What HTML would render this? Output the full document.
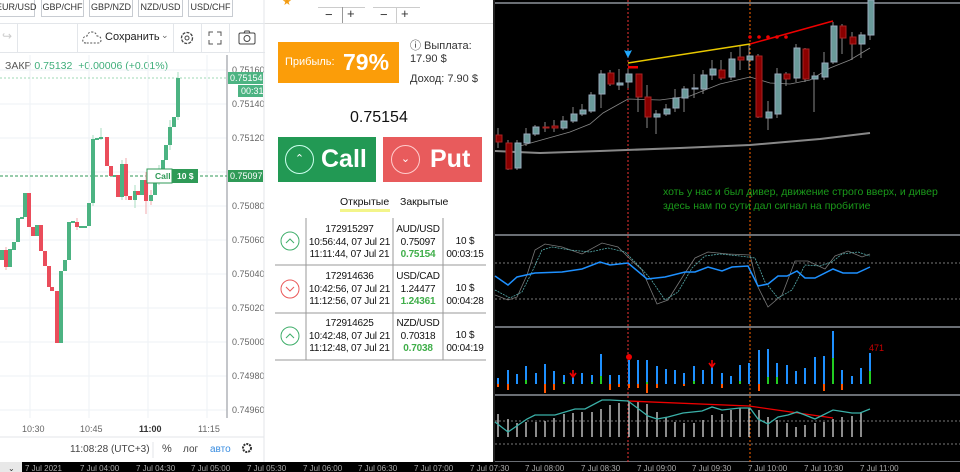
<!DOCTYPE html>
<html><head><meta charset="utf-8"><style>
*{margin:0;padding:0;box-sizing:border-box}
body{width:960px;height:472px;overflow:hidden;background:#000;font-family:"Liberation Sans",sans-serif;position:relative}
.a{position:absolute;white-space:nowrap}
.tab{position:absolute;top:0;height:17px;border:1px solid #c8ccd2;border-top:none;font-size:9px;color:#333;text-align:center;line-height:15px;background:#fff}
.cell{position:absolute;font-size:10px;color:#111;text-align:center;line-height:12.5px;white-space:nowrap;letter-spacing:-0.2px}
.g{color:#3fae49;font-weight:bold}
</style></head><body>
<!-- left panel -->
<div class="a" style="left:0;top:0;width:265px;height:462px;background:#fff"></div>
<div class="tab" style="left:-5px;width:40px">EUR/USD</div>
<div class="tab" style="left:41px;width:43px">GBP/CHF</div>
<div class="tab" style="left:89px;width:44px">GBP/NZD</div>
<div class="tab" style="left:138px;width:45px">NZD/USD</div>
<div class="tab" style="left:188px;width:45px">USD/CHF</div>
<div class="a" style="left:0;top:23px;width:265px;height:1px;background:#e3e6ea"></div>
<div class="a" style="left:0;top:52px;width:265px;height:1px;background:#e3e6ea"></div>
<div class="a" style="left:17px;top:24px;width:1px;height:28px;background:#e3e6ea"></div>
<div class="a" style="left:77px;top:24px;width:1px;height:28px;background:#e3e6ea"></div>
<div class="a" style="left:173px;top:24px;width:1px;height:28px;background:#e3e6ea"></div>
<div class="a" style="left:201px;top:24px;width:1px;height:28px;background:#e3e6ea"></div>
<div class="a" style="left:229px;top:24px;width:1px;height:28px;background:#e3e6ea"></div>
<div class="a" style="left:2px;top:29px;font-size:12px;color:#ccc">↪</div>
<svg class="a" style="left:82px;top:30px" width="20" height="16"><path d="M4 13 Q0 13 1 9 Q2 6 5 6 Q6 2 10 2 Q14 2 15 6 Q19 6 19 10 Q19 13 16 13 Z" fill="none" stroke="#555" stroke-dasharray="2 1.5"/></svg>
<div class="a" style="left:105px;top:31px;font-size:11px;color:#222">Сохранить</div>
<div class="a" style="left:161px;top:30px;font-size:9px;color:#666">⌄</div>
<svg class="a" style="left:178px;top:29px" width="18" height="18"><circle cx="9" cy="9" r="5.5" fill="none" stroke="#444" stroke-width="1.3" stroke-dasharray="3 1.2"/><circle cx="9" cy="9" r="2" fill="none" stroke="#444"/></svg>
<svg class="a" style="left:208px;top:31px" width="14" height="14" stroke="#555" fill="none"><path d="M1 5V1h4M9 1h4v4M13 9v4H9M5 13H1V9"/></svg>
<svg class="a" style="left:238px;top:30px" width="18" height="15" stroke="#444" fill="none"><rect x="1" y="3" width="16" height="11" rx="1.5"/><circle cx="9" cy="8.5" r="3"/><path d="M6 3l1-2h4l1 2"/></svg>
<div class="a" style="left:5px;top:60px;font-size:10.5px;color:#555">ЗАКР <span style="color:#3fae7a">0.75132</span> &nbsp;<span style="color:#3fae7a">+0.00006 (+0.01%)</span></div>
<svg class="a" style="left:0;top:0" width="265" height="462">
<g stroke="#eef2f6" stroke-width="1">
<path d="M0 70H227M0 104H227M0 138H227M0 172H227M0 206H227M0 240H227M0 274H227M0 308H227M0 342H227M0 376H227M0 410H227M30 55V418M89 55V418M148 55V418M207 55V418"/></g>
<line x1="227" y1="55" x2="227" y2="418" stroke="#b0b3b8" stroke-width="1.5"/>
<g font-size="9" fill="#666" font-family="Liberation Sans">
<text x="232" y="73">0.75160</text><text x="232" y="107">0.75140</text><text x="232" y="141">0.75120</text><text x="232" y="209">0.75080</text><text x="232" y="243">0.75060</text><text x="232" y="277">0.75040</text><text x="232" y="311">0.75020</text><text x="232" y="345">0.75000</text><text x="232" y="379">0.74980</text><text x="232" y="413">0.74960</text>
<text x="22" y="432">10:30</text><text x="80" y="432">10:45</text><text x="139" y="432" font-weight="bold" fill="#333">11:00</text><text x="198" y="432">11:15</text>
</g>
<line x1="0" y1="78" x2="227" y2="78" stroke="#9fd8b5" stroke-dasharray="2 2"/>
<line x1="0" y1="176" x2="227" y2="176" stroke="#2f9a57" stroke-dasharray="3 2"/>
<g stroke-width="1">
<path stroke="#f2a8ae" d="M6 247V270M126 158V200M146 172V214M77 218V230M151 190V205"/>
<path stroke="#a8dcc0" d="M93 135V206M101 128V140M122 160V200M135 185V208M159 165V185M170 120V150M178 72V120"/>
</g>
<g fill="#4cb382">
<rect x="0" y="250" width="4" height="10"/><rect x="8" y="249" width="4" height="18"/><rect x="12" y="242" width="4" height="8"/><rect x="16" y="218" width="4" height="24"/><rect x="20" y="217" width="4" height="2"/><rect x="23" y="193" width="4" height="24"/><rect x="35" y="225" width="4" height="11"/><rect x="59" y="271" width="4" height="72"/><rect x="63" y="260" width="4" height="11"/><rect x="67" y="222" width="4" height="38"/><rect x="71" y="221" width="4" height="2"/><rect x="79" y="226" width="4" height="2"/><rect x="83" y="226" width="4" height="2"/><rect x="87" y="203" width="4" height="23"/><rect x="91" y="139" width="4" height="64"/><rect x="95" y="138" width="4" height="2"/><rect x="99" y="137" width="4" height="2"/><rect x="113" y="175" width="4" height="2"/><rect x="120" y="164" width="4" height="33"/><rect x="133" y="191" width="4" height="9"/><rect x="140" y="180" width="4" height="15"/><rect x="149" y="195" width="4" height="6"/><rect x="153" y="180" width="4" height="15"/><rect x="157" y="170" width="4" height="10"/><rect x="161" y="160" width="4" height="10"/><rect x="164" y="145" width="4" height="15"/><rect x="168" y="127" width="4" height="18"/><rect x="172" y="117" width="4" height="10"/><rect x="176" y="78" width="4" height="39"/>
</g>
<g fill="#ea4d5b">
<rect x="4" y="250" width="4" height="17"/><rect x="27" y="193" width="4" height="34"/><rect x="31" y="227" width="4" height="9"/><rect x="39" y="225" width="4" height="26"/><rect x="43" y="251" width="4" height="15"/><rect x="47" y="266" width="4" height="21"/><rect x="50" y="287" width="4" height="4"/><rect x="55" y="291" width="4" height="52"/><rect x="75" y="222" width="4" height="5"/><rect x="105" y="137" width="4" height="29"/><rect x="109" y="166" width="4" height="10"/><rect x="116" y="175" width="4" height="22"/><rect x="124" y="164" width="4" height="32"/><rect x="128" y="196" width="4" height="4"/><rect x="136" y="191" width="4" height="4"/><rect x="144" y="180" width="4" height="21"/>
</g>
<rect x="147" y="169" width="25" height="14" fill="#fff" stroke="#2f9a57"/><text x="155" y="179" font-size="8.5" fill="#2f9a57" font-weight="bold" font-family="Liberation Sans">Call</text>
<rect x="172" y="169" width="26" height="14" fill="#2f9a57"/><text x="177" y="179" font-size="8.5" fill="#fff" font-weight="bold" font-family="Liberation Sans">10 $</text>
<rect x="228" y="72" width="35" height="12" fill="#4cb382"/><text x="230" y="81" font-size="9" fill="#fff" font-family="Liberation Sans">0.75154</text>
<rect x="238" y="85" width="25" height="12" fill="#4cb382"/><text x="241" y="94" font-size="9" fill="#fff" font-family="Liberation Sans">00:31</text>
<rect x="228" y="170" width="35" height="12" fill="#2f9a57"/><text x="230" y="179" font-size="9" fill="#fff" font-family="Liberation Sans">0.75097</text>
<line x1="0" y1="437" x2="264" y2="437" stroke="#e3e6ea"/>
<line x1="153" y1="442" x2="153" y2="458" stroke="#e3e6ea"/>
<g font-size="10" font-family="Liberation Sans"><text x="70" y="452" fill="#444">11:08:28 (UTC+3)</text><text x="162" y="452" fill="#444" font-size="11">%</text><text x="183" y="452" fill="#444">лог</text><text x="210" y="452" fill="#3a8de0">авто</text></g>
<circle cx="247" cy="448" r="4" fill="none" stroke="#333" stroke-width="2" stroke-dasharray="2 1"/>
<line x1="264" y1="0" x2="264" y2="462" stroke="#e3e6ea"/>
</svg>

<!-- right white panel -->
<div class="a" style="left:265px;top:0;width:228px;height:462px;background:#fff"></div>
<div class="a" style="left:282px;top:-5px;font-size:11px;color:#f39c12">★</div>
<div class="a" style="left:318px;top:7px;width:47px;height:1px;background:#ccc"></div>
<div class="a" style="left:373px;top:7px;width:47px;height:1px;background:#ccc"></div>
<div class="a" style="left:342px;top:7px;width:1px;height:17px;background:#999"></div>
<div class="a" style="left:396px;top:7px;width:1px;height:17px;background:#ccc"></div>
<div class="a" style="left:325px;top:7px;font-size:13px;color:#333">−</div><div class="a" style="left:347px;top:6px;font-size:13px;color:#333">+</div>
<div class="a" style="left:380px;top:7px;font-size:13px;color:#333">−</div><div class="a" style="left:401px;top:6px;font-size:13px;color:#333">+</div>
<div class="a" style="left:265px;top:23px;width:228px;height:1px;background:#ddd"></div>
<div class="a" style="left:278px;top:42px;width:121px;height:41px;background:#fb9d09"></div>
<div class="a" style="left:285px;top:56px;font-size:11px;color:#fff">Прибыль:</div>
<div class="a" style="left:343px;top:49px;font-size:23px;color:#fff;font-weight:bold">79%</div>
<div class="a" style="left:410px;top:40px;font-size:11px;color:#333;line-height:13px">ⓘ Выплата:<br>17.90 $</div>
<div class="a" style="left:410px;top:73px;font-size:11px;color:#333">Доход: 7.90 $</div>
<div class="a" style="left:350px;top:109px;font-size:16px;color:#111">0.75154</div>
<div class="a" style="left:278px;top:137px;width:98px;height:45px;background:#229954"></div>
<div class="a" style="left:285px;top:145px;width:29px;height:29px;border:1px solid #cfe;border-radius:50%;color:#fff;font-size:11px;text-align:center;line-height:27px">⌃</div>
<div class="a" style="left:321px;top:145px;font-size:25px;color:#fff;font-weight:bold">Call</div>
<div class="a" style="left:383px;top:137px;width:99px;height:45px;background:#e85b5c"></div>
<div class="a" style="left:391px;top:145px;width:29px;height:29px;border:1px solid #fcc;border-radius:50%;color:#fff;font-size:11px;text-align:center;line-height:27px">⌄</div>
<div class="a" style="left:430px;top:145px;font-size:25px;color:#fff;font-weight:bold">Put</div>
<div class="a" style="left:340px;top:196px;font-size:10.5px;color:#111">Открытые</div>
<div class="a" style="left:340px;top:209px;width:50px;height:3px;background:#f3f58a"></div>
<div class="a" style="left:400px;top:196px;font-size:10.5px;color:#111">Закрытые</div>
<svg class="a" style="left:265px;top:210px" width="228" height="155">
<g stroke="#999"><path d="M41 8V150M128 8V150M178 8V150"/><path d="M10 55H221M10 103H221M10 150H221"/></g>
<circle cx="25" cy="31" r="9" fill="none" stroke="#3fae6a"/><path d="M21 33l4-4 4 4" fill="none" stroke="#3fae6a"/>
<circle cx="25" cy="79" r="9" fill="none" stroke="#ea5a5a"/><path d="M21 77l4 4 4-4" fill="none" stroke="#ea5a5a"/>
<circle cx="25" cy="126" r="9" fill="none" stroke="#3fae6a"/><path d="M21 128l4-4 4 4" fill="none" stroke="#3fae6a"/>
</svg>
<div class="cell" style="left:302px;top:224px;width:95px">172915297<br>10:56:44, 07 Jul 21<br>11:11:44, 07 Jul 21</div>
<div class="cell" style="left:393px;top:224px;width:50px">AUD/USD<br>0.75097<br><span class="g">0.75154</span></div>
<div class="cell" style="left:443px;top:236px;width:44px">10 $<br>00:03:15</div>
<div class="cell" style="left:302px;top:271px;width:95px">172914636<br>10:42:56, 07 Jul 21<br>11:12:56, 07 Jul 21</div>
<div class="cell" style="left:393px;top:271px;width:50px">USD/CAD<br>1.24477<br><span class="g">1.24361</span></div>
<div class="cell" style="left:443px;top:283px;width:44px">10 $<br>00:04:28</div>
<div class="cell" style="left:302px;top:318px;width:95px">172914625<br>10:42:48, 07 Jul 21<br>11:12:48, 07 Jul 21</div>
<div class="cell" style="left:393px;top:318px;width:50px">NZD/USD<br>0.70318<br><span class="g">0.7038</span></div>
<div class="cell" style="left:443px;top:330px;width:44px">10 $<br>00:04:19</div>

<!-- dark chart -->
<svg class="a" style="left:0;top:0" width="960" height="472">
<rect x="493" y="0" width="467" height="472" fill="#000"/>
<g stroke="#6a6e74" stroke-width="2"><path d="M495 3H960M495 235H960M495 327H960M495 395H960M495 462H960"/></g>
<line x1="494" y1="0" x2="494" y2="462" stroke="#444"/>
<g stroke="#e33" stroke-dasharray="2 2"><path d="M628 0V462"/></g>
<g stroke="#f60" stroke-dasharray="2 2"><path d="M750 0V462"/></g>
<polyline fill="none" stroke="#888" stroke-width="2" points="495,151 540,153 600,151 680,148 750,145 820,139 870,133"/>
<polyline fill="none" stroke="#888" stroke-width="0.8" points="520,146 545,139 570,132 590,124 603,113 628,99 660,100 690,96 720,84 750,77 770,83 790,84 810,80 830,68 850,60 870,48"/>
<g stroke="#888"><path d="M498 128V148M508 140V170M517 140V170M526 128V146M535 125V136M545 122V132M554 120V132M563 116V130M573 107V123M582 104V116M591 92V113M601 70V108M610 70V86M619 69V90M628 69V88M638 74V112M647 85V128M656 110V134M666 104V116M675 89V112M684 86V112M694 74V98M703 70V94M712 60V80M721 60V80M731 52V80M740 45V70M749 44V70M758 54V118M768 101V130M777 68V118M786 72V86M796 44V82M805 48V82M814 72V112M824 52V80M833 22V64M842 24V54M852 32V60M861 32V58M870 0V40"/></g>
<g fill="#6a9a9a" stroke="#9ab">
<rect x="515" y="143" width="6" height="25"/><rect x="524" y="134" width="6" height="9"/><rect x="533" y="127" width="6" height="7"/><rect x="561" y="121" width="6" height="7"/><rect x="571" y="114" width="6" height="7"/><rect x="580" y="110" width="6" height="4"/><rect x="589" y="95" width="6" height="16"/><rect x="599" y="74" width="6" height="20"/><rect x="617" y="83" width="6" height="2"/><rect x="626" y="74" width="6" height="8"/><rect x="654" y="114" width="6" height="3"/><rect x="664" y="109" width="6" height="5"/><rect x="673" y="98" width="6" height="10"/><rect x="682" y="89" width="6" height="9"/><rect x="692" y="88" width="6" height="1"/><rect x="701" y="75" width="6" height="14"/><rect x="710" y="69" width="6" height="6"/><rect x="729" y="59" width="6" height="18"/><rect x="747" y="56" width="6" height="4"/><rect x="766" y="112" width="6" height="6"/><rect x="775" y="74" width="6" height="40"/><rect x="794" y="48" width="6" height="30"/><rect x="812" y="76" width="6" height="3"/><rect x="822" y="63" width="6" height="14"/><rect x="831" y="26" width="6" height="36"/><rect x="859" y="35" width="6" height="9"/><rect x="868" y="0" width="6" height="35"/>
</g>
<g fill="#8b0000" stroke="#a22">
<rect x="496" y="135" width="6" height="7"/><rect x="506" y="143" width="6" height="26"/><rect x="543" y="127" width="6" height="1"/><rect x="552" y="126" width="6" height="2"/><rect x="608" y="73" width="6" height="11"/><rect x="636" y="74" width="6" height="23"/><rect x="645" y="97" width="6" height="20"/><rect x="719" y="70" width="6" height="8"/><rect x="738" y="57" width="6" height="3"/><rect x="756" y="56" width="6" height="61"/><rect x="784" y="74" width="6" height="5"/><rect x="803" y="49" width="6" height="30"/><rect x="840" y="26" width="6" height="12"/><rect x="850" y="37" width="6" height="7"/>
</g>
<line x1="628" y1="63" x2="750" y2="44" stroke="#e8c800" stroke-width="1.5"/>
<line x1="750" y1="44" x2="833" y2="21" stroke="#e00" stroke-width="1.5"/>
<g fill="#e00"><circle cx="750" cy="37" r="1.8"/><circle cx="759" cy="37" r="1.8"/><circle cx="768" cy="37" r="1.8"/><circle cx="777" cy="37" r="1.8"/><circle cx="786" cy="37" r="1.8"/><rect x="628" y="66" width="10" height="2.5"/></g>
<path d="M628 52l-3 -1 3 6 3 -6z M628 50V55" stroke="#2af" fill="#2af"/>
<text x="663" y="195" font-size="10.5" fill="#1a9a1a" font-family="Liberation Sans">хоть у нас и был дивер, движение строго вверх, и дивер</text>
<text x="663" y="209" font-size="10.5" fill="#1a9a1a" font-family="Liberation Sans">здесь нам по сути дал сигнал на пробитие</text>
<!-- panel2 -->
<g stroke="#777" stroke-dasharray="2 2"><path d="M495 263H960M495 299H960"/></g>
<polyline fill="none" stroke="#777" stroke-width="0.8" points="495,295 508,300 517,297 527,275 535,250 545,244 562,247 582,254 602,243 618,247 628,257 642,270 657,304 668,300 685,273 695,258 708,252 728,254 750,255 758,287 768,307 782,295 795,261 808,261 825,269 835,256 848,251 862,257 870,254"/>
<polyline fill="none" stroke="#5aa" stroke-width="0.8" stroke-dasharray="2 1" points="495,290 510,298 522,292 532,272 542,250 552,247 570,250 590,252 608,248 625,252 635,262 650,278 665,300 678,292 692,268 705,256 720,254 740,256 755,258 765,282 778,298 792,290 805,265 820,266 832,262 842,254 858,252 870,256"/>
<polyline fill="none" stroke="#1e90ff" stroke-width="1.5" points="495,276 508,285 517,277 535,273 562,272 582,269 600,262 610,265 628,263 647,279 665,277 685,272 695,272 708,267 722,271 732,267 748,266 758,286 768,284 778,276 787,276 797,271 805,278 815,278 833,269 843,273 857,273 870,267"/>
<!-- panel3 -->
<g stroke="#1e90ff" stroke-width="2"><path d="M498 378V384M508 370V384M517 374V384M526 366V384M536 373V384M545 364V384M554 371V384M564 375V384M573 377V384M582 373V384M592 375V384M601 354V384M610 375V384M619 375V384M629 360V384M638 360V384M647 360V384M657 366V384M666 369V384M675 370V384M684 373V384M694 366V384M703 370V384M712 367V384M722 373V384M731 376V384M740 365V384M749 363V384M759 350V384M768 349V384M777 363V384M787 365V384M796 371V384M805 368V384M815 357V384M824 356V384M833 331V384M842 370V384M852 376V384M861 368V384M870 353V384"/></g>
<g stroke="#2c2" stroke-width="2"><path d="M526 380V384M601 376V384M694 381V384M740 381V384M768 377V384M777 377V384M833 358V384M870 371V384M564 382V384M592 382V384M647 382V384"/></g>
<g stroke="#f50" stroke-width="2"><path d="M498 384V387M508 384V390M545 384V393M554 384V390M610 384V390M619 384V387M629 384V388M638 384V388M647 384V393M657 384V388M684 384V386M722 384V388M759 384V391M824 384V391M842 384V390"/></g>
<circle cx="629" cy="357" r="3" fill="#e00"/>
<path d="M573 370v6M570 373l3 4 3-4M712 360v6M709 363l3 4 3-4" stroke="#e00" stroke-width="1.6" fill="none"/>
<text x="869" y="351" font-size="9" fill="#c00" font-family="Liberation Sans">471</text>
<!-- panel4 -->
<g stroke="#777" stroke-dasharray="2 2"><path d="M495 421H960M495 444H960"/></g>
<g stroke="#bbb" stroke-width="1.5"><path d="M498 414V437M508 419V437M517 423V437M526 422V437M536 422V437M545 421V437M554 418V437M564 414V437M573 413V437M582 412V437M592 412V437M601 409V437M610 405V437M619 403V437M629 401V437M638 401V437M647 404V437M657 412V437M666 417V437M675 422V437M684 423V437M694 423V437M703 420V437M712 415V437M722 414V437M731 410V437M740 408V437M749 408V437M759 410V437M768 417V437M777 420V437M787 423V437M796 427V437M805 425V437M815 423V437M824 422V437M833 419V437M842 417V437M852 416V437M861 412V437"/></g>
<polyline fill="none" stroke="#e00" stroke-width="1.3" points="628,401 749,406 833,418"/>
<polyline fill="none" stroke="#3ab0a8" stroke-width="1.3" points="495,422 508,432 527,419 535,415 555,415 575,409 585,409 602,400 610,400 628,401 648,416 657,419 668,417 683,413 702,411 712,407 722,410 740,408 750,408 758,419 768,424 778,417 788,415 797,412 805,415 815,419 833,410 852,413 860,413 870,409"/>
<!-- bottom axis -->
<rect x="0" y="462" width="960" height="10" fill="#000"/>
<rect x="0" y="462" width="22" height="10" fill="#e8e8e8"/>
<text x="8" y="471" font-size="8" fill="#333">⌄</text>
<g font-size="8" fill="#aaa" font-family="Liberation Sans">
<text x="25" y="471">7 Jul 2021</text><text x="80" y="471">7 Jul 04:00</text><text x="136" y="471">7 Jul 04:30</text><text x="191" y="471">7 Jul 05:00</text><text x="247" y="471">7 Jul 05:30</text><text x="303" y="471">7 Jul 06:00</text><text x="358" y="471">7 Jul 06:30</text><text x="414" y="471">7 Jul 07:00</text><text x="470" y="471">7 Jul 07:30</text><text x="525" y="471">7 Jul 08:00</text><text x="581" y="471">7 Jul 08:30</text><text x="637" y="471">7 Jul 09:00</text><text x="692" y="471">7 Jul 09:30</text><text x="748" y="471">7 Jul 10:00</text><text x="804" y="471">7 Jul 10:30</text><text x="860" y="471">7 Jul 11:00</text>
</g>
</svg>
</body></html>
